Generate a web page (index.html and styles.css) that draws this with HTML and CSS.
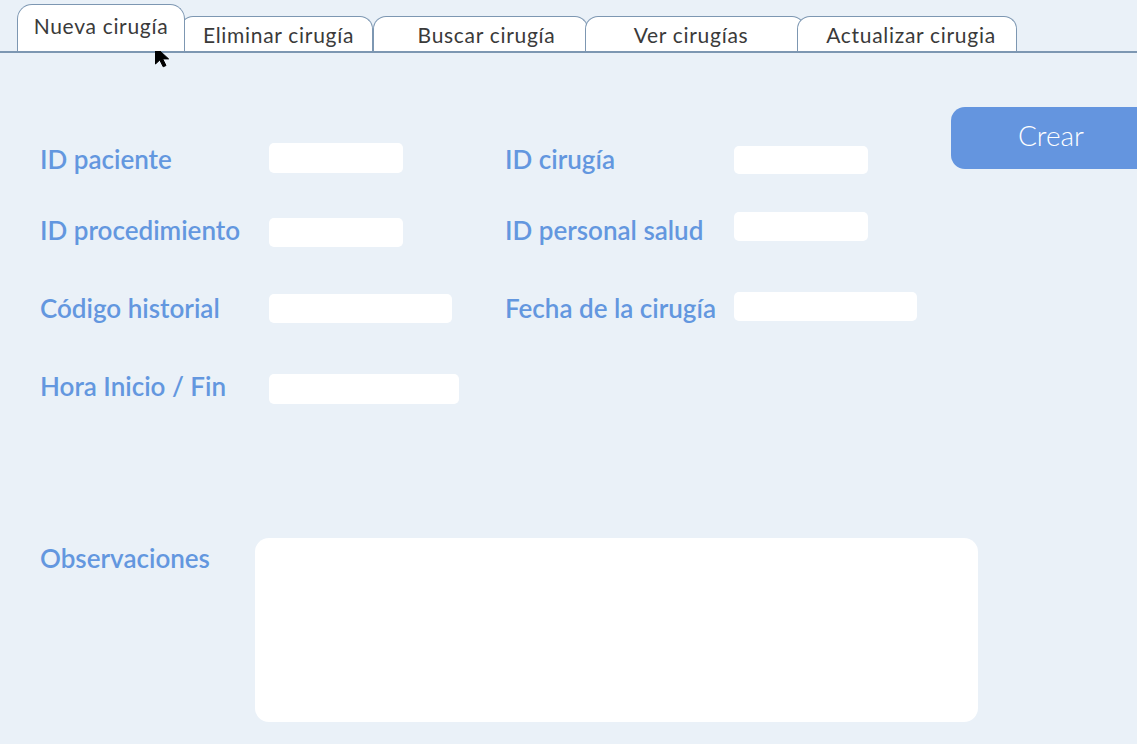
FILE: index.html
```html
<!DOCTYPE html>
<html lang="es">
<head>
<meta charset="utf-8">
<title>Nueva cirugía</title>
<link rel="stylesheet" href="styles.css">
</head>
<body>
<nav class="tabbar">
  <div class="tab t1">Nueva cirugía</div>
  <div class="tab t2">Eliminar cirugía</div>
  <div class="tab t3">Buscar cirugía</div>
  <div class="tab t4">Ver cirugías</div>
  <div class="tab t5">Actualizar cirugia</div>
</nav>
<svg class="cursor" width="18" height="22" viewBox="0 0 18 22"><path d="M1.5 1 L1.5 18 L5.8 14 L9.2 20.8 L12 19.5 L8.7 12.9 L14.6 12.9 Z" fill="#000" stroke="#000" stroke-width="1" stroke-linejoin="round"/></svg>
<main class="form">
  <div class="row r1">
    <label class="lbl">ID paciente</label>
    <div class="inp w134"></div>
    <label class="lbl">ID cirugía</label>
    <div class="inp w134 down3"></div>
    <button class="crear">Crear</button>
  </div>
  <div class="row r2">
    <label class="lbl">ID procedimiento</label>
    <div class="inp w134 bottom"></div>
    <label class="lbl">ID personal salud</label>
    <div class="inp w134 top"></div>
  </div>
  <div class="row r3">
    <label class="lbl">Código historial</label>
    <div class="inp w183 bottom"></div>
    <label class="lbl">Fecha de la cirugía</label>
    <div class="inp w183 top"></div>
  </div>
  <div class="row r4">
    <label class="lbl">Hora Inicio / Fin</label>
    <div class="inp w190"></div>
  </div>
  <div class="row obs">
    <label class="lbl obs-lbl">Observaciones</label>
    <div class="textarea"></div>
  </div>
</main>
</body>
</html>
```

FILE: styles.css
```css
html, body {
  margin: 0;
  padding: 0;
}
body {
  width: 1137px;
  height: 744px;
  overflow: hidden;
  position: relative;
  background: #eaf1f8;
  font-family: Lato, "Open Sans", sans-serif;
}
.tabbar {
  display: flex;
  align-items: flex-end;
  height: 51px;
  padding-left: 17px;
  border-bottom: 2px solid #7d97b2;
}
.tab {
  position: relative;
  box-sizing: border-box;
  height: 35px;
  display: flex;
  align-items: center;
  justify-content: center;
  background: #fff;
  border: 1px solid #7d97b2;
  border-bottom: none;
  border-radius: 13px 13px 0 0;
  font-size: 21px;
  font-weight: 400;
  letter-spacing: 0.7px;
  color: #3a3a3a;
  padding-top: 1px;
  white-space: nowrap;
}
.t1 { width: 168px; height: 47px; z-index: 5; padding-bottom: 6px; border-radius: 15px 15px 0 0; }
.t2 { width: 193px; margin-left: -5px; z-index: 4; padding-left: 4px; }
.t3 { width: 215px; z-index: 1; padding-left: 12px; }
.t4 { width: 220px; margin-left: -3px; z-index: 2; padding-right: 8px; }
.t5 { width: 220px; margin-left: -8px; z-index: 3; padding-left: 8px; }

.cursor {
  position: absolute;
  left: 154px;
  top: 46px;
}

.form {
  padding-left: 40px;
}
.row {
  display: grid;
  grid-template-columns: 229px 236px 229px 217px 200px;
  grid-template-rows: 100%;
  align-items: center;
}
.r1 { margin-top: 89px; height: 31px; }
.r2 { margin-top: 39px; height: 35px; }
.r3 { margin-top: 45px; height: 31px; }
.r4 { margin-top: 51px; height: 30px; }
.obs { margin-top: 134px; grid-template-columns: 215px 723px; align-items: start; }

.lbl {
  font-size: 26px;
  font-weight: 600;
  color: #6397df;
  white-space: nowrap;
}
.r1 .lbl { margin-top: 1px; margin-bottom: -1px; }
.r4 .lbl { margin-top: -6px; }
.obs-lbl { margin-top: 4px; }

.inp {
  height: 30px;
  background: #fff;
  border-radius: 5px;
}
.w134 { width: 134px; }
.w183 { width: 183px; }
.w190 { width: 190px; }
.down3 { height: 28px; margin-top: 5px; }
.bottom { align-self: end; height: 29px; }
.top { align-self: start; height: 29px; }

.crear {
  align-self: start;
  margin-top: -35px;
  width: 200px;
  height: 62px;
  border: none;
  border-radius: 14px 0 0 14px;
  background: #6495df;
  color: #fff;
  font-family: Lato, "Open Sans", sans-serif;
  font-size: 28px;
  font-weight: 300;
  padding: 0 0 6px 0;
  text-align: center;
}

.textarea {
  height: 184px;
  background: #fff;
  border-radius: 14px;
}
```
